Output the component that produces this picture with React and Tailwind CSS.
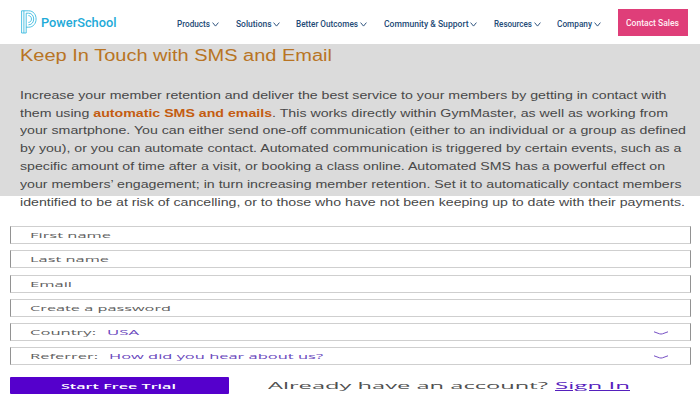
import { useLayoutEffect, useRef, useState } from "react";

// Single line of text stretched horizontally to a fixed width.
function Fit({ w, className = "", inner = "", children }) {
  const ref = useRef(null);
  const [scale, setScale] = useState(1);
  useLayoutEffect(() => {
    setScale(w / parseFloat(getComputedStyle(ref.current).width));
  }, [w]);
  return (
    <span className={`block shrink-0 whitespace-nowrap ${className}`} style={{ width: w }}>
      <span ref={ref} className={`inline-block origin-left align-top ${inner}`} style={{ transform: `scaleX(${scale})` }}>
        {children}
      </span>
    </span>
  );
}

const nav = [
  { label: "Products", w: 33, gap: "mr-[16.5px]" },
  { label: "Solutions", w: 35.5, gap: "mr-[16px]" },
  { label: "Better Outcomes", w: 62, gap: "mr-[16.5px]" },
  { label: "Community & Support", w: 84.5, gap: "mr-[16.5px]" },
  { label: "Resources", w: 38, gap: "mr-[16.5px]" },
  { label: "Company", w: 35, gap: "mr-[16.5px]" },
];

const paragraph = [
  { w: 646.5, t: "Increase your member retention and deliver the best service to your members by getting in contact with" },
  {
    w: 648,
    t: (
      <>
        them using <b className="text-[#c45c10]">automatic SMS and emails</b>. This works directly within GymMaster, as well as working from
      </>
    ),
  },
  { w: 666, t: "your smartphone. You can either send one-off communication (either to an individual or a group as defined" },
  { w: 661.5, t: "by you), or you can automate contact. Automated communication is triggered by certain events, such as a" },
  { w: 645, t: "specific amount of time after a visit, or booking a class online. Automated SMS has a powerful effect on" },
  { w: 661.5, t: "your members’ engagement; in turn increasing member retention. Set it to automatically contact members" },
  { w: 665, t: "identified to be at risk of cancelling, or to those who have not been keeping up to date with their payments." },
];

const fields = [
  { label: "First name", w: 81 },
  { label: "Last name", w: 79 },
  { label: "Email", w: 42 },
  { label: "Create a password", w: 141 },
  { label: "Country:", w: 66, value: "USA", vw: 32, gap: "ml-[10.5px]" },
  { label: "Referrer:", w: 68, value: "How did you hear about us?", vw: 214, gap: "ml-[10.5px]" },
];

function Logo() {
  return (
    <svg className="mr-[4px] h-[24px] w-[16px] shrink-0" viewBox="0 0 16 24" fill="none" stroke="#25b2dc" strokeWidth="0.8">
      <path d="M.6.8V23H5.2V3.2M2.9.8V23M.6.8H7.6C17.6.8 17.6 17.2 7.6 17.2" />
      <path d="M5.2 3.2H7.6C14.4 3.2 14.4 14.8 7.6 14.8H7.4M7.4 5.6C11.5 5.6 11.5 12.4 7.4 12.4M5.2 17.2H7.6" />
    </svg>
  );
}

export default function App() {
  return (
    <div className="flex h-[400px] w-[700px] flex-col overflow-hidden bg-white font-['Liberation_Sans',sans-serif]">
      <header className="flex h-[44px] shrink-0 items-center pl-[21px]">
        <Logo />
        <Fit w={75.5} className="mr-[60.5px] font-['Roboto',sans-serif] text-[13.5px] leading-[20px] font-medium text-[#22aad8]">
          PowerSchool
        </Fit>
        <nav className="flex items-center pt-[4px] font-['Roboto',sans-serif] text-[8.5px] leading-[12px] font-medium text-[#234a76]">
          {nav.map((n) => (
            <div key={n.label} className={`flex items-center ${n.gap}`}>
              <Fit w={n.w}>{n.label}</Fit>
              <svg className="ml-[2px] h-[5px] w-[7px]" viewBox="0 0 7 5" fill="none" stroke="#31557f" strokeWidth="1">
                <path d="M.6.6 3.5 4.1 6.4.6" />
              </svg>
            </div>
          ))}
        </nav>
        <button className="mt-px flex h-[27px] w-[70px] shrink-0 items-center justify-center bg-[#df3e79] font-['Roboto',sans-serif] text-[9.5px] leading-[12px] font-medium text-[#fff0f5]">
          <Fit w={53} className="text-left">Contact Sales</Fit>
        </button>
      </header>

      <section className="h-[152px] shrink-0 bg-[#dbdbdb] pl-[20px]">
        <h1 className="pt-[2px]">
          <Fit w={312} className="text-[16px] leading-[20px] text-[#b87424]">Keep In Touch with SMS and Email</Fit>
        </h1>
        <div className="pt-[20.7px] text-[11.5px] leading-[17.85px] text-[#484848]">
          {paragraph.map((l, i) => (
            <Fit key={i} w={l.w}>{l.t}</Fit>
          ))}
        </div>
      </section>

      <form className="mt-[30px] flex flex-col gap-[6.3px] pr-[9px] pl-[10px] font-['Open_Sans',sans-serif] text-[7.5px] leading-[10px]">
        {fields.map((f) => (
          <div key={f.label} className="flex h-[18px] items-center border border-x-[#929292] border-y-[#cfcfcf] pl-[19px]">
            <Fit w={f.w} className="font-medium text-[#5e5e5e]">{f.label}</Fit>
            {f.value && (
              <>
                <Fit w={f.vw} className={`font-medium text-[#6a48bd] ${f.gap}`}>{f.value}</Fit>
                <svg className="mt-[2px] mr-[21px] ml-auto h-[4px] w-[16px]" viewBox="0 0 16 4" fill="none" stroke="#7650c4" strokeWidth="1">
                  <path d="M1 .8 6.5 2.8Q8 3.3 9.5 2.8L15 .8" />
                </svg>
              </>
            )}
          </div>
        ))}
      </form>

      <div className="mt-[12px] flex items-center pl-[10px] font-['Open_Sans',sans-serif]">
        <button className="flex h-[17px] w-[219px] items-center justify-center rounded-[1px] bg-[#5500cc] text-[7.5px] leading-[10px] font-semibold text-white">
          <Fit w={115} className="-ml-[2px] text-left">Start Free Trial</Fit>
        </button>
        <Fit w={280} className="ml-[39px] text-[9.5px] leading-[12px] font-medium text-[#505050]">Already have an account?</Fit>
        <Fit w={75} className="ml-[7px] text-[9.5px] leading-[12px] font-medium text-[#5520bd]" inner="underline decoration-1 underline-offset-1">Sign In</Fit>
      </div>
    </div>
  );
}
